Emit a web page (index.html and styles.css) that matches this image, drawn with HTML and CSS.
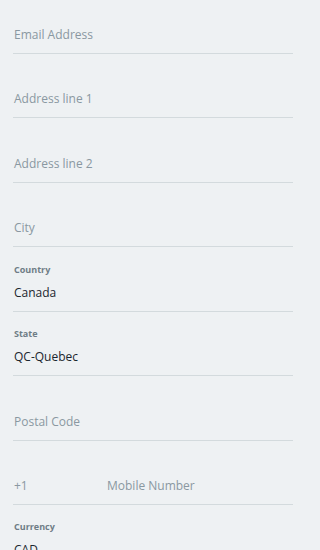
FILE: index.html
```html
<!DOCTYPE html>
<html lang="en">
<head>
<meta charset="utf-8">
<title>Address form</title>
<link rel="stylesheet" href="styles.css">
</head>
<body>
<form class="form">
  <div class="field first"><span class="placeholder">Email Address</span></div>
  <div class="field"><span class="placeholder">Address line 1</span></div>
  <div class="field"><span class="placeholder">Address line 2</span></div>
  <div class="field"><span class="placeholder">City</span></div>
  <div class="field"><span class="label">Country</span><span class="value">Canada</span></div>
  <div class="field"><span class="label">State</span><span class="value">QC-Quebec</span></div>
  <div class="field"><span class="placeholder">Postal Code</span></div>
  <div class="field phone"><span class="placeholder code">+1</span><span class="placeholder">Mobile Number</span></div>
  <div class="field"><span class="label">Currency</span><span class="value">CAD</span></div>
</form>
</body>
</html>
```
FILE: styles.css
```css
html, body {
  margin: 0;
  padding: 0;
  background: #eef1f3;
  height: 100%;
  overflow: hidden;
}
body {
  font-family: "Open Sans", "Noto Sans", sans-serif;
}
.form {
  display: flex;
  flex-direction: column;
  width: 306px;
  box-sizing: border-box;
  padding: 0 13px;
}
.field {
  flex: none;
  border-bottom: 1px solid #d3dadd;
  display: flex;
  flex-direction: column;
  justify-content: flex-end;
  padding: 0 1px 8px;
  box-sizing: border-box;
  height: 64.43px;
}
.field.first {
  height: 54px;
}
.placeholder {
  font-size: 12px;
  line-height: 20px;
  color: #8a98a1;
}
.label {
  font-size: 9px;
  font-weight: 700;
  line-height: 14px;
  color: #6f7d86;
  margin-bottom: 6px;
}
.value {
  font-size: 12px;
  line-height: 20px;
  color: #1b262e;
}
.phone {
  flex-direction: row;
  justify-content: flex-start;
  align-items: flex-end;
}
.code {
  width: 93px;
}
```
